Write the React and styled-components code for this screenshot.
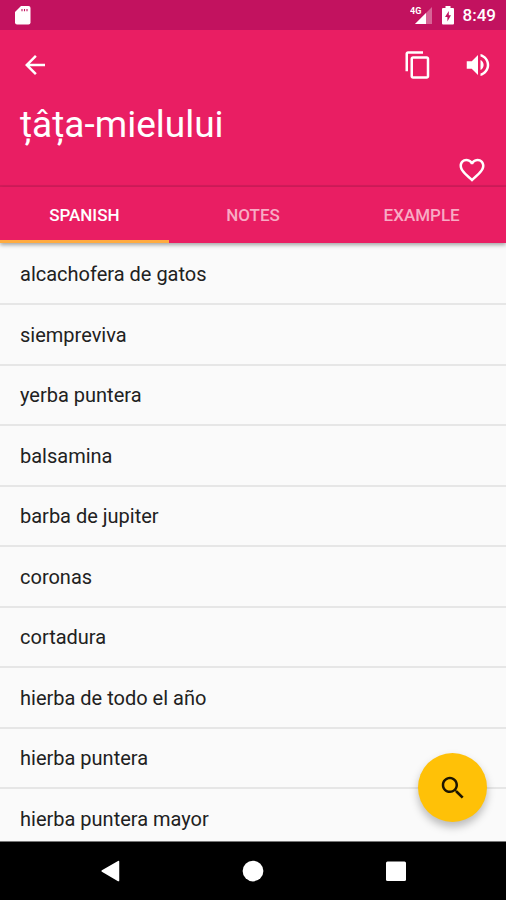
import React, { useState } from "react";
import styled, { createGlobalStyle } from "styled-components";

const GlobalStyle = createGlobalStyle`
  *, *::before, *::after { box-sizing: border-box; }
  body { margin: 0; font-family: Roboto, "Noto Sans", sans-serif; background: #fafafa; }
  button { border: 0; padding: 0; background: none; color: inherit; font: inherit; cursor: pointer; }
`;

const Screen = styled.div`
  position: relative;
  display: flex;
  flex-direction: column;
  height: 100vh;
  overflow: hidden;
`;

const StatusBar = styled.div`
  flex: none;
  display: flex;
  align-items: center;
  justify-content: space-between;
  height: 30px;
  padding: 0 10px 0 15px;
  background: #c2125f;
  color: #fff;
`;

const StatusGroup = styled.div`
  display: flex;
  align-items: center;
  gap: 9px;
`;

const Clock = styled.time`
  font-size: 17px;
  line-height: 30px;
  font-weight: 500;
`;

const Header = styled.header`
  flex: none;
  background: #e91e63;
  color: #fff;
  border-bottom: 2px solid #d31c5b;
`;

const Toolbar = styled.div`
  display: flex;
  align-items: center;
  justify-content: space-between;
  height: 70px;
  padding: 0 13px 0 20px;
`;

const Actions = styled.div`
  display: flex;
  gap: 30px;
`;

const IconButton = styled.button`
  display: flex;
  width: 30px;
  height: 30px;
`;

const Title = styled.h1`
  margin: 0;
  padding: 0 20px;
  font-size: 37px;
  line-height: 50px;
  font-weight: 400;
`;

const FavoriteRow = styled.div`
  display: flex;
  justify-content: flex-end;
  padding: 5px 19px 0;
  height: 35px;
`;

const Tabs = styled.div`
  position: relative;
  z-index: 1;
  flex: none;
  display: grid;
  grid-template-columns: repeat(3, 1fr);
  height: 56px;
  background: #e91e63;
  box-shadow: 0 2px 4px rgba(0, 0, 0, 0.35);
`;

const Tab = styled.button`
  && {
    padding-top: 3px;
    border-bottom: 3px solid ${(p) => (p.$active ? "#ffab40" : "transparent")};
    color: ${(p) => (p.$active ? "#fff" : "#f8abc4")};
    font-size: 17px;
    font-weight: 500;
  }
`;

const WordList = styled.ul`
  flex: 1;
  min-height: 0;
  margin: 0;
  padding: 2px 0 0;
  overflow: hidden;
  list-style: none;
  background: #fafafa;
`;

const Word = styled.li`
  display: flex;
  align-items: center;
  height: 60px;
  padding: 0 20px;
  border-bottom: 2px solid #e6e6e6;
  color: #212121;
  font-size: 20px;
  line-height: 24px;

  &:nth-child(even) { height: 61px; }
`;

const SearchButton = styled.button`
  position: absolute;
  right: 19px;
  bottom: 78px;
  display: flex;
  align-items: center;
  justify-content: center;
  width: 69px;
  height: 69px;
  && {
    background: #ffc107;
    color: #1c1500;
  }
  border-radius: 50%;
  box-shadow: 0 5px 8px rgba(0, 0, 0, 0.26);
`;

const NavBar = styled.nav`
  flex: none;
  display: flex;
  align-items: center;
  justify-content: center;
  gap: 113px;
  height: 59px;
  border-top: 1px solid #777;
  background: #000;
  color: #fff;
`;

const Icon = ({ d, children }) => (
  <svg width="30" height="30" viewBox="0 0 24 24" fill="currentColor" aria-hidden="true">
    {d && <path d={d} />}
    {children}
  </svg>
);

const SdCard = () => (
  <svg width="16" height="19" viewBox="0 0 16 19" aria-hidden="true">
    <path d="M6 0h7.500a2 2 0 0 1 2 2v14.500a2 2 0 0 1-2 2h-11.500a2 2 0 0 1-2-2V6z" fill="#fff" />
    <path d="M7 3v2.200M9.500 3v2.200M12 3v2.200" stroke="#c2125f" strokeWidth="1.100" />
  </svg>
);

const Signal = () => (
  <svg width="23" height="19" viewBox="0 0 23 19" aria-hidden="true">
    <path d="M22 1v17H5z" fill="#fff" opacity=".35" />
    <path d="M16 7v11H5z" fill="#fff" />
    <text x="0" y="8" fill="#fff" fontSize="9" fontWeight="700" fontFamily="Roboto, sans-serif">4G</text>
  </svg>
);

const Battery = () => (
  <svg width="12" height="19" viewBox="0 0 12 19" aria-hidden="true">
    <path d="M3.500 0h5v2H11a1 1 0 0 1 1 1v14.500a1 1 0 0 1-1 1H1a1 1 0 0 1-1-1V3a1 1 0 0 1 1-1h2.500z" fill="#fff" />
    <path d="M6.800 5L3 11h2.400v4.500L9 9.300H6.800z" fill="#c2125f" />
  </svg>
);

const tabs = ["SPANISH", "NOTES", "EXAMPLE"];

const words = [
  "alcachofera de gatos",
  "siempreviva",
  "yerba puntera",
  "balsamina",
  "barba de jupiter",
  "coronas",
  "cortadura",
  "hierba de todo el año",
  "hierba puntera",
  "hierba puntera mayor",
];

export default function App() {
  const [active, setActive] = useState(tabs[0]);

  return (
    <>
      <GlobalStyle />
      <Screen>
        <StatusBar>
          <SdCard />
          <StatusGroup>
            <Signal />
            <Battery />
            <Clock>8:49</Clock>
          </StatusGroup>
        </StatusBar>
        <Header>
          <Toolbar>
            <IconButton aria-label="Back">
              <Icon d="M20 11H7.830l5.590-5.590L12 4l-8 8 8 8 1.410-1.410L7.830 13H20v-2z" />
            </IconButton>
            <Actions>
              <IconButton aria-label="Copy">
                <Icon d="M16 1H4c-1.100 0-2 .9-2 2v14h2V3h12V1zm3 4H8c-1.100 0-2 .9-2 2v14c0 1.100.9 2 2 2h11c1.100 0 2-.9 2-2V7c0-1.100-.9-2-2-2zm0 16H8V7h11v14z" />
              </IconButton>
              <IconButton aria-label="Listen">
                <Icon d="M3 9v6h4l5 5V4L7 9H3zM14 3.230v2.060c2.890.86 5 3.540 5 6.710s-2.110 5.850-5 6.710v2.060c4.010-.91 7-4.490 7-8.770s-2.990-7.860-7-8.770z">
                  <path d="M16.500 12c0-1.770-1.020-3.290-2.500-4.030v8.050c1.480-.73 2.500-2.250 2.500-4.020z" />
                </Icon>
              </IconButton>
            </Actions>
          </Toolbar>
          <Title>țâța-mielului</Title>
          <FavoriteRow>
            <IconButton aria-label="Add to favorites">
              <Icon d="M16.500 3c-1.740 0-3.410.81-4.500 2.090C10.910 3.810 9.240 3 7.500 3 4.420 3 2 5.420 2 8.500c0 3.780 3.400 6.860 8.550 11.540L12 21.350l1.450-1.320C18.600 15.360 22 12.280 22 8.500 22 5.420 19.580 3 16.500 3zm-4.400 15.550l-.1.100-.1-.1C7.140 14.240 4 11.390 4 8.500 4 6.500 5.500 5 7.500 5c1.540 0 3.040.99 3.570 2.360h1.870C13.460 5.990 14.960 5 16.500 5c2 0 3.500 1.500 3.500 3.500 0 2.890-3.140 5.740-7.900 10.050z" />
            </IconButton>
          </FavoriteRow>
        </Header>
        <Tabs role="tablist">
          {tabs.map((tab) => (
            <Tab
              key={tab}
              role="tab"
              aria-selected={tab === active}
              $active={tab === active}
              onClick={() => setActive(tab)}
            >
              {tab}
            </Tab>
          ))}
        </Tabs>
        <WordList>
          {words.map((word) => (
            <Word key={word}>{word}</Word>
          ))}
        </WordList>
        <NavBar>
          <IconButton aria-label="System back">
            <Icon><path d="M5.500 11.400 18.400 3.900q1-.5 1 .6v15q0 1.100-1 .6L5.500 12.600q-.9-.6 0-1.200z" /></Icon>
          </IconButton>
          <IconButton aria-label="Home">
            <Icon><circle cx="12" cy="12" r="8.300" /></Icon>
          </IconButton>
          <IconButton aria-label="Recent apps">
            <Icon><rect x="4" y="4.400" width="16" height="15.600" rx="1.200" /></Icon>
          </IconButton>
        </NavBar>
        <SearchButton aria-label="Search">
          <Icon d="M15.500 14h-.79l-.28-.27C15.410 12.590 16 11.110 16 9.500 16 5.910 13.090 3 9.500 3S3 5.910 3 9.500 5.910 16 9.500 16c1.610 0 3.090-.59 4.230-1.570l.27.28v.79l5 4.990L20.490 19l-4.990-5zm-6 0C7.010 14 5 11.990 5 9.500S7.010 5 9.500 5 14 7.010 14 9.500 11.990 14 9.500 14z" />
        </SearchButton>
      </Screen>
    </>
  );
}
